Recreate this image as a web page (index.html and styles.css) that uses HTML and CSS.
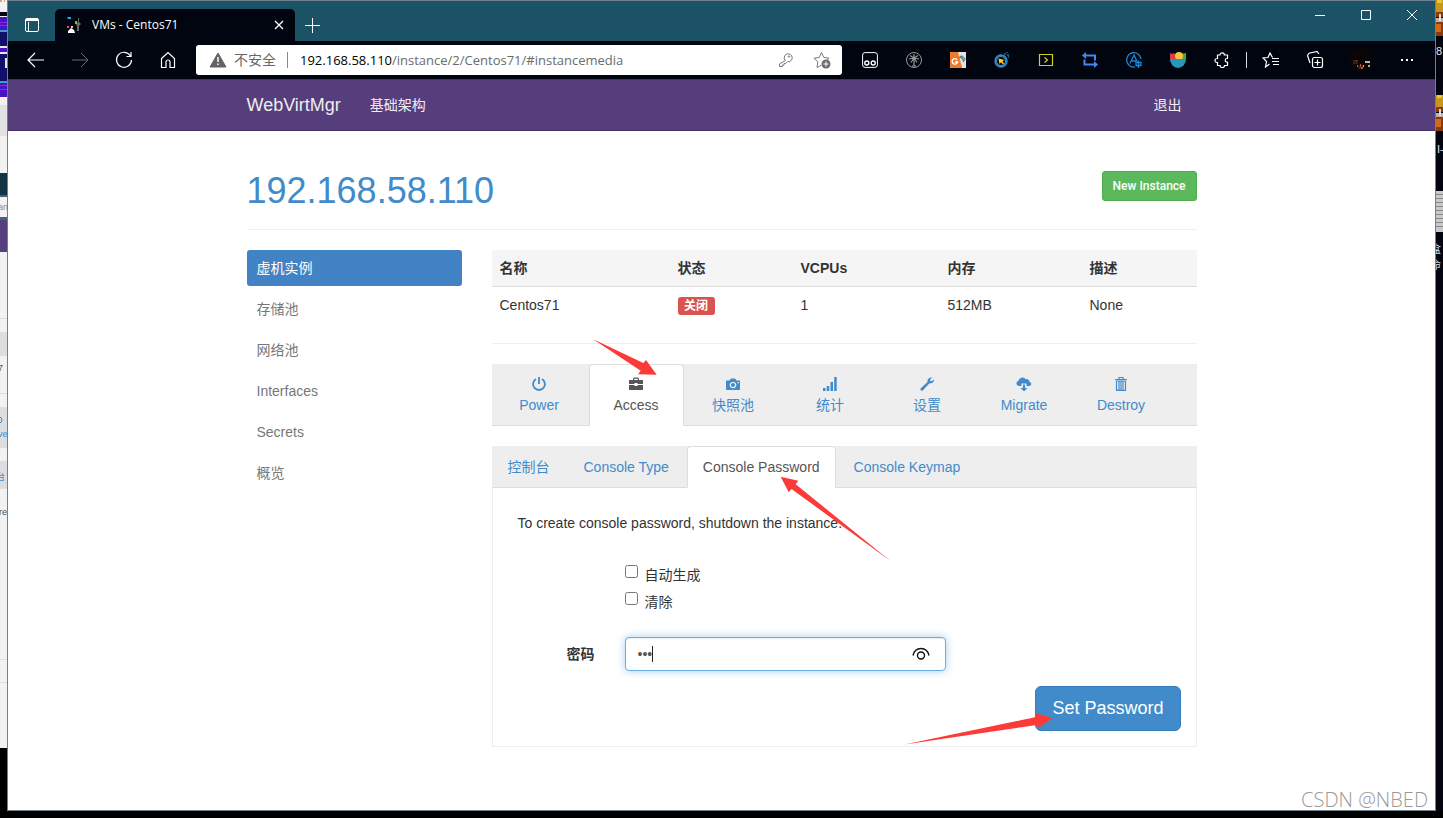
FILE: index.html
```html
<!DOCTYPE html>
<html lang="zh-CN">
<head>
<meta charset="utf-8">
<title>VMs - Centos71</title>
<link rel="stylesheet" href="styles.css">
</head>
<body>
<div class="desktop">
  <div class="strip strip-left" aria-hidden="true">
    <svg width="7" height="748" viewBox="0 0 7 748">
      <path fill="#f2f2f2" d="M0 0h7v748H0z"/>
      <path fill="#d9a27a" d="M0 0h2v2H0zM4 0h1v2H4z"/>
      <path fill="#05060e" d="M0 12h7v4H0z"/>
      <path fill="#4a12c4" d="M0 17h7v80H0z"/>
      <path fill="#8a2be0" d="M0 22h7v1H0zM0 25h7v1H0zM0 85h7v1H0zM0 89h7v1H0z"/>
      <path fill="#3aa0c8" d="M0 30h7v2H0zM0 81h7v2H0z"/>
      <path fill="#10106a" d="M0 32h7v14H0zM0 54h7v27H0z"/>
      <path fill="#e8e8f0" d="M0 46h7v2H0zM0 52h7v2H0zM5 58h2v10H5z"/>
      <path fill="#e2e2e4" d="M0 105h7v31H0z"/>
      <path fill="#123342" d="M0 173h7v22H0z"/>
      <path fill="#44627c" d="M0 195h7v2H0zM0 217h7v3H0z"/>
      <path fill="#573e7c" d="M0 220h7v32H0z"/>
      <path fill="#ddd" d="M0 318h7v1H0zM0 332h7v24H0zM0 393h7v1H0zM0 407h7v41H0zM0 461h7v28H0zM0 659h7v1H0zM0 682h7v1H0z"/>
      <g font-size="9" font-family="Liberation Sans, Noto Sans CJK SC, sans-serif">
        <text x="-2" y="210" fill="#888">an</text>
        <text x="-2" y="371" fill="#555">7</text>
        <text x="-2" y="437" fill="#428bca">ve</text>
        <text x="-4" y="480" fill="#428bca">台</text>
        <text x="-1" y="515" fill="#555">re</text>
      </g>
      <circle cx="-1" cy="420" r="3" fill="none" stroke="#428bca"/>
    </svg>
  </div>

  <div class="window">
    <header class="titlebar">
      <button class="tab-actions" aria-label="Tab actions"><svg width="16" height="16" viewBox="0 0 16 16"><rect x="1.5" y="1.5" width="13" height="13" rx="1.5"/><path d="M1.5 3.5h13M2 2.5h12M4.5 5v9.500"/></svg></button>
      <div class="tab">
        <svg class="plain" width="16" height="16" viewBox="0 0 16 16"><path fill="#1ba7e8" d="M1 0h4v2H2z"/><path fill="#666" d="M12 1h1v4l2 2-2 2v5h-2V9l-1-2 2-2z"/><path fill="#6ad01c" d="M9 4h2v3H9z"/><path fill="#e8468a" d="M1 9h2v2H1z"/><path fill="#f5d35a" d="M5 9h2v2H5z"/><path fill="#fff" d="M2 14l3-3 3 2 1 3H2z"/></svg>
        <span class="tab-title">VMs - Centos71</span>
        <button class="tab-close" aria-label="Close tab"><svg width="10" height="10" viewBox="0 0 10 10"><path d="M1 1l8 8M9 1L1 9" stroke-width="1.3"/></svg></button>
      </div>
      <button class="tab-new" aria-label="New tab"><svg width="15" height="15" viewBox="0 0 15 15"><path d="M7.500 0v15M0 7.500h15"/></svg></button>
      <div class="window-buttons">
        <button aria-label="Minimize"><svg width="10" height="10" viewBox="0 0 10 10"><path d="M0 5.500h10"/></svg></button>
        <button aria-label="Maximize"><svg width="10" height="10" viewBox="0 0 10 10"><path d="M.5.5h9v9h-9z"/></svg></button>
        <button aria-label="Close"><svg width="10" height="10" viewBox="0 0 10 10"><path d="M0 0l10 10M10 0L0 10"/></svg></button>
      </div>
    </header>

    <div class="toolbar">
      <div class="tools">
        <button aria-label="Back"><svg width="18" height="16" viewBox="0 0 18 16"><path d="M17 8H1.500M8 1L1 8l7 7" stroke-width="1.2"/></svg></button>
        <button class="disabled" aria-label="Forward"><svg width="18" height="16" viewBox="0 0 18 16"><path d="M1 8h15.500M10 1l7 7-7 7"/></svg></button>
        <button aria-label="Refresh"><svg width="18" height="18" viewBox="0 0 18 18"><path d="M15.500 5A7.500 7.500 0 1 0 16.500 9M16 1v4.500h-4.500" stroke-width="1.2"/></svg></button>
        <button aria-label="Home"><svg width="16" height="18" viewBox="0 0 16 18"><path d="M1.500 7.500L8 1.500l6.500 6v9H10V11a2 2 0 0 0-4 0v5.500H1.500z" stroke-width="1.2"/></svg></button>
      </div>
      <div class="address">
        <svg class="warn" width="18" height="16" viewBox="0 0 18 16"><path d="M9 1L17 15H1z" fill="#636363" stroke="#636363" stroke-linejoin="round"/><path d="M9 5v5M9 11.500v1.500" stroke="#fff" stroke-width="1.500"/></svg>
        <span class="insecure">不安全</span>
        <span class="url"><span class="host">192.168.58.110</span>/instance/2/Centos71/#instancemedia</span>
        <button class="key" aria-label="Saved password"><svg width="16" height="16" viewBox="0 0 16 16"><path d="M7.300 8.500a4 4 0 1 1 2.200 1.200L7.500 11.500H6V13H4.500v1.500H1.500V12z"/><circle cx="11" cy="4.500" r=".7"/></svg></button>
        <button class="star" aria-label="Add to favorites"><svg width="20" height="18" viewBox="0 0 20 18"><path d="M9.500 14l-4.500 2.500.8-5.500L2 7.200l5.300-.8L9.500 1.500l2.300 4.900 5.200.8-2 2"/><circle cx="14" cy="13" r="4.500" fill="#6c6c6c" stroke="none"/><path d="M14 10.500v5M11.500 13h5" stroke="#fff"/></svg></button>
      </div>
      <div class="tools">
        <button aria-label="Extension: reader"><svg width="16" height="16" viewBox="0 0 16 16"><rect x=".6" y=".6" width="14.800" height="14.800" rx="2.500"/><circle cx="4.800" cy="11" r="2" stroke-width="1.400"/><circle cx="11.200" cy="11" r="2" stroke-width="1.400"/></svg></button>
        <button aria-label="Extension: palm"><svg width="16" height="16" viewBox="0 0 16 16"><g stroke="#999"><circle cx="8" cy="8" r="7.500"/><path d="M8 5v9M8 6L4 3.500M8 6l4-2.500M8 6L3 7M8 6l5 1M8 6l-3 4.500M8 6l3 4.500M8 5V2M6 14h4" stroke-width="1.200"/></g></svg></button>
        <button aria-label="Extension: translate"><svg class="plain" width="16" height="16" viewBox="0 0 16 16"><path fill="#f07a2c" d="M0 0h9l3 16H0z"/><path fill="#e4e4e4" d="M8 0h8v16h-4z"/><path d="M7 7.700A2.700 2.700 0 1 0 7.500 10H5" fill="none" stroke="#fff" stroke-width="1.400"/><path d="M9 6l3-2 3 3-2 3M10 4l4 5" fill="none" stroke="#5e8190" stroke-width="1.300"/></svg></button>
        <button aria-label="Extension: pointer"><svg width="16" height="16" viewBox="0 0 16 16"><circle cx="7" cy="9" r="5.800" stroke="#2b8fd0" stroke-width="1.800"/><circle cx="7" cy="9" r="4.500" stroke="#8dd4f5" stroke-width=".6"/><path d="M4.500 6.500l6 1.500-2 1.200 1.500 2.300-1 1-2-2.300-1.500 1.800z" fill="#ffd21f" stroke="none"/><path d="M10 2h2M13 3h2M12 0h2M14 5h1" stroke="#35a9ea"/></svg></button>
        <button aria-label="Extension: console"><svg width="16" height="14" viewBox="0 0 16 14"><path d="M1.500 1.500h13v11h-13zM6.500 4.500L9.500 7l-3 2.500" stroke="#d6cf16" stroke-width="1.200"/></svg></button>
        <button aria-label="Extension: switch"><svg width="16" height="16" viewBox="0 0 16 16"><path d="M13 8.500V3.500H3M2.500 7.500v5H13" stroke="#3e8bf5" stroke-width="2"/><path d="M0 3.500L4 0v7zM16 12.500L12 9v7z" fill="#3e8bf5" stroke="none"/></svg></button>
        <button aria-label="Extension: language"><svg width="16" height="16" viewBox="0 0 16 16"><g stroke="#1a87d8" stroke-width="1.300"><path d="M9 15A7.200 7.200 0 1 1 15 7M4 11.500L8 3l3 6.500M5.500 9H10M10 10.500h5v3h-5zM12.500 8.500V16"/></g></svg></button>
        <button aria-label="Extension: bowl"><svg class="plain" width="16" height="16" viewBox="0 0 16 16"><path fill="#d83d48" d="M0 1l2 1 2-1 3 3-1 4H0z"/><path fill="#48a83d" d="M10 2l6-1v6h-5z"/><circle cx="9" cy="4" r="4" fill="#f8c63d"/><path fill="#2a96ba" d="M0 7h16a8 9 0 0 1-16 0z"/></svg></button>
        <button aria-label="Extensions"><svg width="16" height="16" viewBox="0 0 16 16"><path d="M3.500 3H6a2.200 2.200 0 0 1 4.400 0H13.500v3.500H13a1.800 1.800 0 0 0 0 3.600h.5V13.500h-3a2.200 2.200 0 0 1-4.400 0H3.500v-3H3a2 2 0 0 1 0-4h.5z" stroke-width="1.200"/></svg></button>
        <span class="separator"></span>
        <button aria-label="Favorites"><svg width="18" height="16" viewBox="0 0 18 16"><path d="M10.500 5.500L8 1 6 5.500 1 6l3.500 3.500L3.500 15l4-3M10 6.500h7M10 9.500h7M11 12.500h6" stroke-width="1.200"/></svg></button>
        <button aria-label="Collections"><svg width="18" height="18" viewBox="0 0 18 18"><rect x="6.500" y="6.500" width="10" height="10" rx="2" stroke-width="1.200"/><path d="M11.500 8.500v6M8.500 11.500h6M4 12L1.500 4.500 3 2.200l8-1.700 2 2.500" stroke-width="1.200"/></svg></button>
        <button class="profile" aria-label="Profile"><svg class="plain" width="24" height="24" viewBox="0 0 24 24"><circle cx="12" cy="12" r="12" fill="#0a0608"/><path fill="#3a1c14" d="M4 12h5v4H4zM9 17h5v4H9z"/><path fill="#b05835" d="M8 17h1v2H8zM12 19h2v2h-2zM7 12h1v1H7zM11 16h1v3h-1z"/><path fill="#a8c0d0" d="M16 13h5v2h-5zM14 17h1v2h-1z"/><path fill="#ccaa70" d="M19 17h2v2h-2z"/></svg></button>
        <button aria-label="Settings"><svg class="plain" width="14" height="4" viewBox="0 0 14 4"><path d="M1 1h2v2H1zM6 1h2v2H6zM11 1h2v2h-2z" fill="#fff"/></svg></button>
      </div>
    </div>

    <div class="page">
      <nav class="navbar">
        <div class="container navbar-inner">
          <a class="brand" href="#">WebVirtMgr</a>
          <a class="nav-link" href="#">基础架构</a>
          <a class="nav-link logout" href="#">退出</a>
        </div>
      </nav>
      <div class="container content">
        <div class="page-header">
          <h1><a href="#">192.168.58.110</a></h1>
          <button class="btn-new">New Instance</button>
        </div>
        <div class="columns">
          <nav class="sidebar">
            <a class="active" href="#">虚机实例</a>
            <a href="#">存储池</a>
            <a href="#">网络池</a>
            <a href="#">Interfaces</a>
            <a href="#">Secrets</a>
            <a href="#">概览</a>
          </nav>
          <main class="main">
            <table class="instances">
              <thead><tr><th class="c-name">名称</th><th class="c-state">状态</th><th class="c-cpu">VCPUs</th><th class="c-mem">内存</th><th>描述</th></tr></thead>
              <tbody><tr><td>Centos71</td><td><span class="label-off">关闭</span></td><td>1</td><td>512MB</td><td>None</td></tr></tbody>
            </table>
            <hr class="rule">
            <nav class="tabs main-tabs">
              <a href="#"><svg width="14" height="14" viewBox="0 0 14 14"><path d="M4 2a5.900 5.900 0 1 0 6 0M7 0v7" fill="none" stroke="currentColor" stroke-width="1.800"/></svg>Power</a>
              <a class="active" href="#"><svg width="14" height="14" viewBox="0 0 14 14"><path fill-rule="evenodd" d="M4 3V1.500L5 .5h4l1 1V3h3.500l.5.5V7H8.500V6h-3v1H0V3.500L.5 3zM5.200 3h3.600V1.700H5.200zM0 8h5.500v1h3V8H14v4.500l-.5.5H.5l-.5-.5z"/></svg>Access</a>
              <a href="#"><svg width="14" height="14" viewBox="0 0 14 14"><path fill-rule="evenodd" d="M0 4l.5-.5h3L5 1.500h4l1.500 2h3l.5.5v8.500l-.5.500H.5L0 12.500zM7 4.700a3.300 3.300 0 1 0 .01 0zM7 6a2 2 0 1 1-.01 0zM11.500 5v1.200H13V5z"/></svg>快照池</a>
              <a href="#"><svg width="14" height="14" viewBox="0 0 14 14"><path d="M0 11h2.500v3H0zM3.700 9h2.500v5H3.700zM7.500 5H10v9H7.500zM11.200 0h2.500v14h-2.500z"/></svg>统计</a>
              <a href="#"><svg width="14" height="14" viewBox="0 0 14 14"><path d="M12.500.5L10 2.500l.5 1.500 1.500.3 2-2c.3 2.500-1.500 4.700-4.500 4L3 13.200c-1.500 1.500-3.500-.5-2.200-2L7.500 5C7 2.500 9 .2 12.500.5z"/></svg>设置</a>
              <a href="#"><svg width="16" height="14" viewBox="0 0 16 14"><path d="M3.500 9H3a2.700 2.700 0 0 1-.5-5.300A4 4 0 0 1 9.500 2a3.300 3.300 0 0 1 4 3c2.500.5 2.200 4-.5 4h-2.500V6.500h-5V9zM7 7.500h2V11h2.500L8 14.500 4.500 11H7z"/></svg>Migrate</a>
              <a href="#"><svg width="14" height="14" viewBox="0 0 14 14"><path d="M1 2.500h12M5 2V.5h4V2M2.500 4v9.400h9V4zM5 4v9M7 4v9M9 4v9" fill="none" stroke="currentColor" stroke-width="1.200"/></svg>Destroy</a>
            </nav>
            <nav class="tabs sub-tabs">
              <a href="#">控制台</a>
              <a href="#">Console Type</a>
              <a class="active" href="#">Console Password</a>
              <a href="#">Console Keymap</a>
            </nav>
            <form class="panel">
              <p>To create console password, shutdown the instance.</p>
              <div class="checks">
                <label><input type="checkbox">自动生成</label>
                <label><input type="checkbox">清除</label>
              </div>
              <div class="field">
                <label for="password">密码</label>
                <div class="password">
                  <input id="password" type="password" value="123">
                  <span class="caret"></span>
                  <button type="button" class="reveal" aria-label="Show password"><svg width="18" height="14" viewBox="0 0 18 14"><path d="M1 8.500C2 4 5 1.500 9 1.500S16 4 17 8.500" fill="none" stroke="#111" stroke-width="1.400"/><circle cx="9" cy="8.500" r="3.500" fill="none" stroke="#111" stroke-width="1.400"/></svg></button>
                </div>
              </div>
              <button type="button" class="btn-submit">Set Password</button>
            </form>
          </main>
        </div>
        <svg class="arrows" width="950" height="680" viewBox="247 131 950 680" aria-hidden="true">
          <path d="M592.800 339L643.300 363l2.700-3 10.700 14.700-18.700-.4 2.700-3.600z"/>
          <path d="M780.700 476.700l17.600 4-2.600 3.600L890.500 561l-99-72-2.800 3.300z"/>
          <path d="M904.500 744.500L1035 717.300l.7-4L1052.700 718l-14.400 10-1.600-3z"/>
        </svg>
      </div>
      <div class="watermark">CSDN @NBED</div>
    </div>
  </div>

  <div class="strip strip-right" aria-hidden="true">
    <svg width="7" height="280" viewBox="0 0 7 280">
      <g id="crate"><path fill="#c8961c" d="M0 0h7v14H0z"/><path fill="#e5c93c" d="M1 0h5v3H1z"/><path fill="#b9b2a8" d="M0 18h7v4H0z"/><path fill="#8a3a0c" d="M0 12h7v5H0zM0 22h7v14H0z"/><path fill="#d06a18" d="M0 24h5v8H0z"/><path fill="#ddd" d="M3 14h2v7H3z"/></g>
      <use href="#crate" y="95"/>
      <path fill="#c9c9c9" d="M0 191h7v41H0z"/>
      <path stroke="#888" d="M0 194.500h7M0 198.500h7M0 202.500h7M0 206.500h7M0 210.500h7M0 214.500h7M0 218.500h7M0 222.500h7M0 226.500h7"/>
      <g fill="#e6e6e6" font-size="11" font-family="Liberation Sans, Noto Sans CJK SC, sans-serif">
        <text x="0" y="55">8</text><text x="1" y="153">I-</text><text x="-6" y="253">盒</text><text x="-6" y="269">命</text>
      </g>
    </svg>
  </div>
</div>
</body>
</html>
```
FILE: styles.css
```css
* { box-sizing: border-box; }
body {
  margin: 0;
  background: #000;
  color: #333;
  font: 14px/20px "Liberation Sans", "Noto Sans CJK SC", sans-serif;
}
a { color: #428bca; text-decoration: none; }
button { margin: 0; padding: 0; border: 0; background: none; font: inherit; color: inherit; }
svg { display: block; flex: none; }

.desktop {
  display: grid;
  grid-template-columns: 7px minmax(0, 1fr) 7px;
  min-height: 100vh;
  padding-bottom: 7px;
}
.strip { overflow: hidden; }
.strip-right { background: #02050f; }

.window {
  display: flex;
  flex-direction: column;
  border: 1px solid #70808e;
  background: #fff;
}

/* Title bar */
.titlebar {
  display: flex;
  align-items: flex-end;
  height: 40px;
  background: #1c5266;
}
.titlebar svg, .tools svg, .address button svg { fill: none; stroke: #fff; }
.titlebar .plain, .tools .plain { stroke: none; }
.titlebar button, .tools button { display: flex; align-items: center; justify-content: center; }
.tab-actions { width: 47px; height: 32px; }
.tab {
  display: flex;
  align-items: center;
  width: 240px;
  height: 32px;
  padding: 0 11px;
  border-radius: 5px 5px 0 0;
  background: #01050f;
  color: #fff;
  font: 12px/16px "Open Sans", sans-serif;
}
.tab-title { flex: 1; padding-left: 10px; }
.tab-new { width: 35px; height: 32px; }
.window-buttons { display: flex; align-self: flex-start; margin-left: auto; }
.window-buttons button { width: 46px; height: 28px; }

/* Toolbar */
.toolbar {
  display: flex;
  align-items: center;
  gap: 6px;
  height: 38px;
  padding: 0 6px;
  background: #01050f;
}
.tools { display: flex; align-items: center; }
.tools button { width: 44px; height: 30px; }
.tools .profile { width: 48px; }
.tools .disabled { opacity: .4; }
.separator { width: 1px; height: 16px; margin: 0 2px; background: #ddd; }
.address {
  display: flex;
  flex: 1;
  align-items: center;
  min-width: 0;
  height: 30px;
  padding: 0 10px 0 13px;
  border-radius: 3px;
  background: #fff;
}
.insecure {
  margin-left: 7px;
  padding-right: 11px;
  border-right: 1px solid #888;
  color: #666;
  line-height: 16px;
}
.url {
  flex: 1;
  padding-left: 12px;
  overflow: hidden;
  white-space: nowrap;
  color: #6b6b6b;
  font-family: "Open Sans", sans-serif;
  font-size: 13px;
}
.host { color: #000; }
.key { margin-right: 18px; }
.address button svg { stroke: #777; }

/* Page */
.page { position: relative; flex: 1; }
.container { width: 100%; max-width: 950px; margin: 0 auto; }
.navbar { border-top: 1px solid #3a3a48; border-bottom: 1px solid #463265; background: #563d7c; }
.navbar-inner { display: flex; align-items: center; height: 50px; }
.brand { color: #eee; font-size: 18px; }
.nav-link { margin-left: 29px; color: #f0ecf6; }
.logout { margin-left: auto; margin-right: 15px; }
.content { position: relative; padding-bottom: 24px; }
.page-header {
  display: flex;
  align-items: flex-start;
  justify-content: space-between;
  margin-top: 40px;
  padding-bottom: 18px;
  border-bottom: 1px solid #eee;
}
.page-header h1 { margin: 0; font-size: 36px; line-height: 40px; font-weight: 400; }
.btn-new {
  height: 30px;
  padding: 0 10px;
  border: 1px solid #4cae4c;
  border-radius: 3px;
  background: #5cb85c;
  color: #fff;
  font-family: Roboto, sans-serif;
  font-size: 12px;
  font-weight: 500;
}
.columns { display: grid; grid-template-columns: 215px minmax(0, 1fr); gap: 30px; margin-top: 20px; }
.sidebar { display: flex; flex-direction: column; gap: 5px; }
.sidebar a { padding: 8px 10px; border-radius: 3px; color: #777; }
.sidebar .active { background: #4183c4; color: #fff; }

.instances { width: 100%; table-layout: fixed; border-collapse: separate; border-spacing: 0; }
.instances th, .instances td { padding: 8px; text-align: left; vertical-align: top; }
.instances th { border-bottom: 1px solid #ddd; background: #f5f5f5; }
.c-name { width: 178px; }
.c-state { width: 123px; }
.c-cpu { width: 147px; }
.c-mem { width: 142px; }
.label-off {
  display: block;
  width: 37px;
  margin-top: 2px;
  border-radius: 3px;
  background: #d9534f;
  color: #fff;
  font-size: 12px;
  font-weight: 700;
  line-height: 18px;
  text-align: center;
}
.rule { margin: 20px 0; border: 0; border-top: 1px solid #eee; }

.tabs { display: flex; gap: 2px; border-bottom: 1px solid #ddd; background: #eee; }
.tabs a { margin-bottom: -1px; padding: 10px 15px; border: 1px solid transparent; border-radius: 4px 4px 0 0; }
.tabs .active { border-color: #ddd #ddd #fff; background: #fff; color: #555; }
.main-tabs { margin-bottom: 20px; }
.main-tabs a { display: flex; flex-direction: column; align-items: center; width: 95px; }
.main-tabs svg { margin: 2px 0 4px; fill: currentColor; }

.panel {
  display: flex;
  flex-direction: column;
  padding: 25px 15px 15px;
  border: 1px solid #eee;
  border-top: 0;
}
.panel p { margin: 0 0 32px; padding-left: 10px; }
.checks { display: flex; flex-direction: column; align-items: flex-start; gap: 7px; margin-left: 117px; }
.checks label { display: flex; align-items: flex-start; gap: 7px; }
.checks input { width: 13px; height: 13px; margin: 0; }
.field { display: grid; grid-template-columns: 87px 321px; gap: 30px; align-items: center; margin: 25px 0 15px; }
.field label { font-weight: 700; text-align: right; }
.password { position: relative; }
.password input {
  display: block;
  width: 100%;
  height: 34px;
  padding: 6px 12px;
  border: 1px solid #66afe9;
  border-radius: 4px;
  outline: 0;
  box-shadow: inset 0 1px 1px rgba(0, 0, 0, .075), 0 0 8px rgba(102, 175, 233, .6);
  color: #555;
  font: inherit;
}
.caret { position: absolute; top: 9px; left: 27px; width: 1px; height: 16px; background: #222; }
.reveal { position: absolute; top: 10px; right: 16px; }
.btn-submit {
  align-self: flex-end;
  padding: 10px 16px;
  border: 1px solid #357ebd;
  border-radius: 6px;
  background: #428bca;
  color: #fff;
  font-size: 18px;
  line-height: 23px;
}
.arrows { position: absolute; top: -40px; left: 0; fill: #fc3a38; pointer-events: none; }
.watermark {
  position: absolute;
  right: 7px;
  bottom: 0;
  color: #999;
  font: 300 20px/20px "Open Sans", "Noto Sans", sans-serif;
}
```
